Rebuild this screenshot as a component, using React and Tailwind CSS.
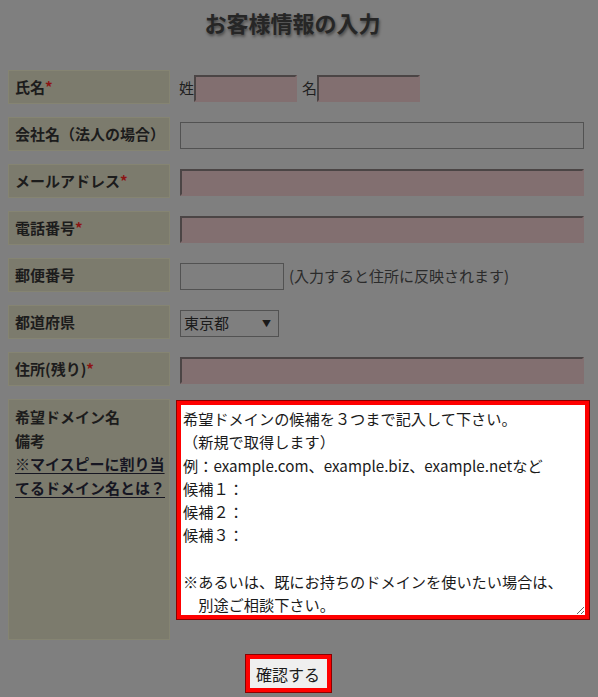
import React from "react";

const font = { fontFamily: '"Noto Sans CJK JP", "Noto Sans", sans-serif' };

const Req = () => <span className="text-[#8c1414]">*</span>;

const Label = ({ children, tall }) => (
  <div
    className={`w-[162px] shrink-0 border border-[#858472] bg-[#7c7b6d] px-[6px] text-[15px] font-bold text-[#1c1c1c] ${
      tall ? "h-[241px] pt-[5px] leading-[23.5px]" : "flex h-[34px] items-center"
    }`}
  >
    {children}
  </div>
);

const pinkInput =
  "h-[27px] border-2 border-t-[#4b4545] border-l-[#4b4545] border-r-[#826f70] border-b-[#826f70] bg-[#826f70] outline-none";

const Row = ({ label, children }) => (
  <div className="flex h-[34px] gap-[10px]">
    <Label>{label}</Label>
    <div className="flex flex-1 items-center pt-[3px] pr-[14px] text-[15px] text-[#1f1f1f]">{children}</div>
  </div>
);

const domainText = `希望ドメインの候補を３つまで記入して下さい。
（新規で取得します）
例：example.com、example.biz、example.netなど
候補１：
候補２：
候補３：

※あるいは、既にお持ちのドメインを使いたい場合は、
　別途ご相談下さい。`;

export default function App() {
  return (
    <div className="min-h-[697px] w-[598px] bg-[#7f7f7f] pl-[8px]" style={font}>
      <div className="flex h-[44px] w-[569px] items-center justify-center text-[22px] font-bold text-[#262626] [text-shadow:1px_2px_3px_rgba(0,0,0,0.45)]">
        お客様情報の入力
      </div>

      <div className="mt-[26px] flex flex-col gap-[13px]">
        <Row
          label={
            <>
              氏名<Req />
            </>
          }
        >
          <span className="-ml-[1px]">姓</span>
          <input className={`${pinkInput} w-[103px]`} />
          <span className="ml-[5px]">名</span>
          <input className={`${pinkInput} w-[103px]`} />
        </Row>

        <Row label="会社名（法人の場合）">
          <input className="h-[27px] w-full border border-[#525252] bg-[#7f7f7f] outline-none" />
        </Row>

        <Row
          label={
            <>
              メールアドレス<Req />
            </>
          }
        >
          <input className={`${pinkInput} w-full`} />
        </Row>

        <Row
          label={
            <>
              電話番号<Req />
            </>
          }
        >
          <input className={`${pinkInput} w-full`} />
        </Row>

        <Row label="郵便番号">
          <input className="h-[27px] w-[104px] border border-[#525252] bg-[#7f7f7f] outline-none" />
          <span className="ml-[5px] text-[#2b2b2b]">(入力すると住所に反映されます)</span>
        </Row>

        <Row label="都道府県">
          <div className="flex h-[27px] w-[99px] items-center justify-between border border-[#525252] bg-[#7f7f7f] pl-[3px] pr-[7px] text-[15px] text-[#1a1a1a]">
            <span>東京都</span>
            <span className="text-[9px]">▼</span>
          </div>
        </Row>

        <Row
          label={
            <>
              住所(残り)<Req />
            </>
          }
        >
          <input className={`${pinkInput} w-full`} />
        </Row>

        <div className="flex gap-[10px]">
          <Label tall>
            <div>希望ドメイン名</div>
            <div>備考</div>
            <a className="block whitespace-nowrap text-[#161622] underline underline-offset-[3px]">
              ※マイスピーに割り当
              <br />
              てるドメイン名とは？
            </a>
          </Label>
          <div className="pt-[2px]">
            <div className="-ml-[3px] w-[412px] border-4 border-[#ff0000] shadow-[0_0_0_1px_#8a0000]">
              <textarea
                className="block h-[210px] w-full resize-y bg-white px-[2px] pt-[2px] text-[15.2px] leading-[23.25px] text-[#1a1a1a] outline-none"
                style={font}
                defaultValue={domainText}
              />
            </div>
          </div>
        </div>
      </div>

      <div className="mt-[15px] flex w-[560px] justify-center">
        <button className="h-[37px] w-[85px] border-4 border-[#ff0000] bg-[#efefef] text-[16px] text-[#1a1a1a] shadow-[0_0_0_1px_#8a0000]">
          確認する
        </button>
      </div>
    </div>
  );
}
